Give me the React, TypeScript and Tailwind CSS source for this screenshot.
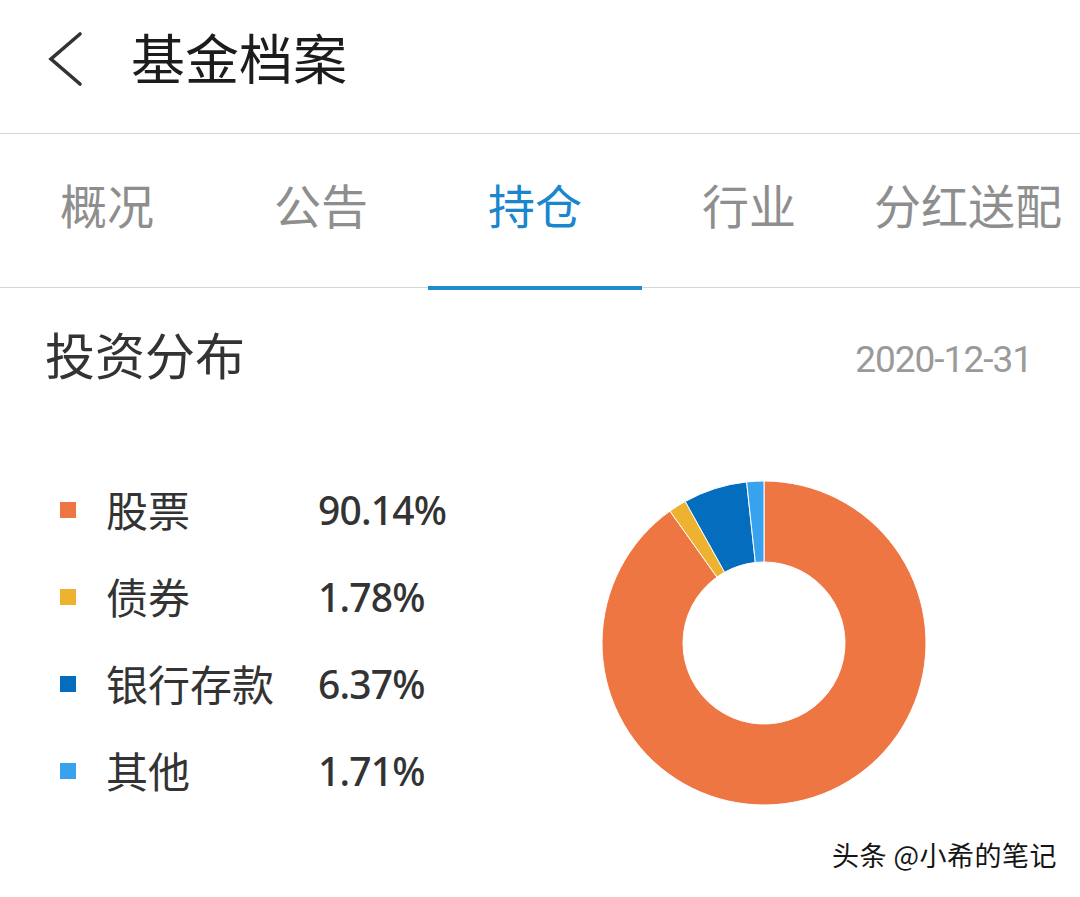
import React from "react";

const CJK = { fontFamily: '"Noto Sans CJK SC", "Noto Sans", sans-serif' };
const NUM = { fontFamily: 'Roboto, "Noto Sans", sans-serif' };

const data = [
  { name: "股票", value: 90.14, color: "#EE7643" },
  { name: "债券", value: 1.78, color: "#EDB22F" },
  { name: "银行存款", value: 6.37, color: "#056DBE" },
  { name: "其他", value: 1.71, color: "#38A2EF" },
];

function arcPath(cx: number, cy: number, R: number, r: number, a0: number, a1: number) {
  const toXY = (rad: number, a: number) => [cx + rad * Math.cos(a), cy + rad * Math.sin(a)];
  const large = a1 - a0 > Math.PI ? 1 : 0;
  const [x0, y0] = toXY(R, a0);
  const [x1, y1] = toXY(R, a1);
  const [x2, y2] = toXY(r, a1);
  const [x3, y3] = toXY(r, a0);
  return `M${x0} ${y0} A${R} ${R} 0 ${large} 1 ${x1} ${y1} L${x2} ${y2} A${r} ${r} 0 ${large} 0 ${x3} ${y3} Z`;
}

function Donut() {
  const total = data.reduce((s, d) => s + d.value, 0);
  let a = -Math.PI / 2;
  return (
    <svg width="326" height="326" viewBox="0 0 326 326">
      {data.map((d) => {
        const a0 = a;
        const a1 = a + (d.value / total) * Math.PI * 2;
        a = a1;
        return (
          <path
            key={d.name}
            d={arcPath(163, 163, 162, 81, a0, a1)}
            fill={d.color}
            stroke="#ffffff"
            strokeWidth="1"
            strokeLinejoin="round"
          />
        );
      })}
    </svg>
  );
}

export default function App() {
  const tabs = ["概况", "公告", "持仓", "行业", "分红送配"];
  return (
    <div className="relative w-[1080px] h-[897px] bg-white overflow-hidden" style={CJK}>
      {/* Header */}
      <div className="h-[133px] flex items-center pb-[16px]">
        <svg className="ml-[48px]" width="36" height="56" viewBox="0 0 36 56">
          <path d="M32 3 L3 28 L32 53" fill="none" stroke="#333333" strokeWidth="3.6" strokeLinecap="round" strokeLinejoin="miter" />
        </svg>
        <div className="ml-[47px] text-[54px] leading-none text-[#1c1c1c] -mt-[4px]">基金档案</div>
      </div>
      <div className="h-px bg-[#d6d6d6]" />

      {/* Tabs */}
      <div className="flex h-[153px] border-b border-[#d6d6d6] box-content">
        {tabs.map((t, i) => (
          <div key={t} className="relative w-[214px] flex items-center justify-center">
            <span
              className={
                "text-[47px] leading-none -mt-[14px] whitespace-nowrap " +
                (i === 2 ? "text-[#1a86cd]" : i === 4 ? "ml-[10px] text-[#8e8e8e]" : "text-[#8e8e8e]")
              }
            >
              {t}
            </span>
            {i === 2 && <div className="absolute left-0 right-0 -bottom-[3px] h-[4px] bg-[#1f8ccc]" />}
          </div>
        ))}
      </div>

      {/* Section header */}
      <div className="flex items-center justify-between h-[90px] mt-[21px] pl-[45px] pr-[48px]">
        <div className="text-[50px] leading-none text-[#333333] -mt-[2px]">投资分布</div>
        <div className="text-[37px] leading-none text-[#9a9a9a] tracking-[-1px] mt-[10px]" style={NUM}>
          2020-12-31
        </div>
      </div>

      {/* Content */}
      <div className="flex">
        <div className="mt-[67px] flex flex-col">
          {data.map((d) => (
            <div key={d.name} className="h-[87px] flex items-center">
              <div className="ml-[60px] w-[16px] h-[16px]" style={{ backgroundColor: d.color }} />
              <div className="ml-[30px] w-[212px] text-[42px] leading-none text-[#333333] -mt-[2px]">{d.name}</div>
              <div className="text-[39px] leading-none text-[#333333] font-medium tracking-[-0.8px]" style={{ fontFamily: '"Noto Sans", Roboto, sans-serif' }}>
                {d.value.toFixed(2)}%
              </div>
            </div>
          ))}
        </div>
        <div className="ml-auto mr-[153px] mt-[81px]">
          <Donut />
        </div>
      </div>

      {/* Watermark */}
      <div
        className="absolute left-[832px] top-[841px] text-[27px] leading-none text-[#151515] whitespace-nowrap tracking-[0.5px]"
        style={{ textShadow: "1px 1px 1px #ffffff, -1px -1px 1px #ffffff, 1px -1px 1px #ffffff, -1px 1px 1px #ffffff" }}
      >
        头条 @小希的笔记
      </div>
    </div>
  );
}
